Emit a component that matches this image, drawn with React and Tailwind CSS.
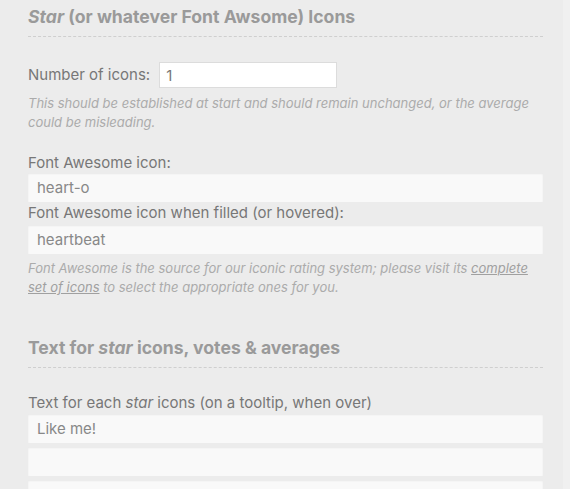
export default function App() {
  const font = { fontFamily: 'Inter, "Liberation Sans", sans-serif' };
  const inputCls =
    "block w-full h-[29px] bg-[#f9f9f9] px-[9px] text-[15px] text-[#888] shadow-[inset_0_1px_2px_rgba(0,0,0,0.07)] outline-none border-0";
  return (
    <div className="min-h-screen bg-[#f0f0f0] flex" style={font}>
      <div className="w-[563px] bg-[#ececec] pl-[28px] pr-[20px] pt-[6px] pb-[20px]">
        <h2 className="text-[17.6px] font-bold text-[#9a9a9a] leading-[22px] pb-[8px] border-b border-dashed border-[#cfcfcf]">
          <em>Star</em> (or whatever Font Awsome) Icons
        </h2>

        <div className="mt-[25px] flex items-center gap-[9px]">
          <label className="text-[15px] text-[#777]">Number of icons:</label>
          <input
            readOnly
            value="1"
            className="w-[178px] h-[26px] bg-white border border-[#dcdcdc] px-[6px] text-[15px] text-[#777] outline-none"
          />
        </div>
        <p className="mt-[6px] text-[13px] italic text-[#ababab] leading-[19px]">
          This should be established at start and should remain unchanged, or the average could be misleading.
        </p>

        <label className="block mt-[21px] text-[15px] text-[#777] leading-[20px]">Font Awesome icon:</label>
        <input readOnly value="heart-o" className={inputCls} />
        <label className="block mt-[1px] text-[15px] text-[#777] leading-[20px]">
          Font Awesome icon when filled (or hovered):
        </label>
        <input readOnly value="heartbeat" className={inputCls + " mt-[2px]"} />
        <p className="mt-[5px] text-[13px] italic text-[#ababab] leading-[19px]">
          Font Awesome is the source for our iconic rating system; please visit its{" "}
          <a className="underline text-[#a0a0a0]">complete set of icons</a> to select the appropriate ones for you.
        </p>

        <h2 className="mt-[40px] text-[17.6px] font-bold text-[#9a9a9a] leading-[22px] pb-[8px] border-b border-dashed border-[#cfcfcf]">
          Text for <em>star</em> icons, votes &amp; averages
        </h2>

        <label className="block mt-[25px] text-[15px] text-[#777] leading-[20px]">
          Text for each <em>star</em> icons (on a tooltip, when over)
        </label>
        <div className="mt-[1px] flex flex-col gap-[4px]">
          <input readOnly value="Like me!" className={inputCls} />
          <input readOnly value="" className={inputCls} />
          <input readOnly value="" className={inputCls} />
        </div>
      </div>
      <div className="flex-1" />
    </div>
  );
}
